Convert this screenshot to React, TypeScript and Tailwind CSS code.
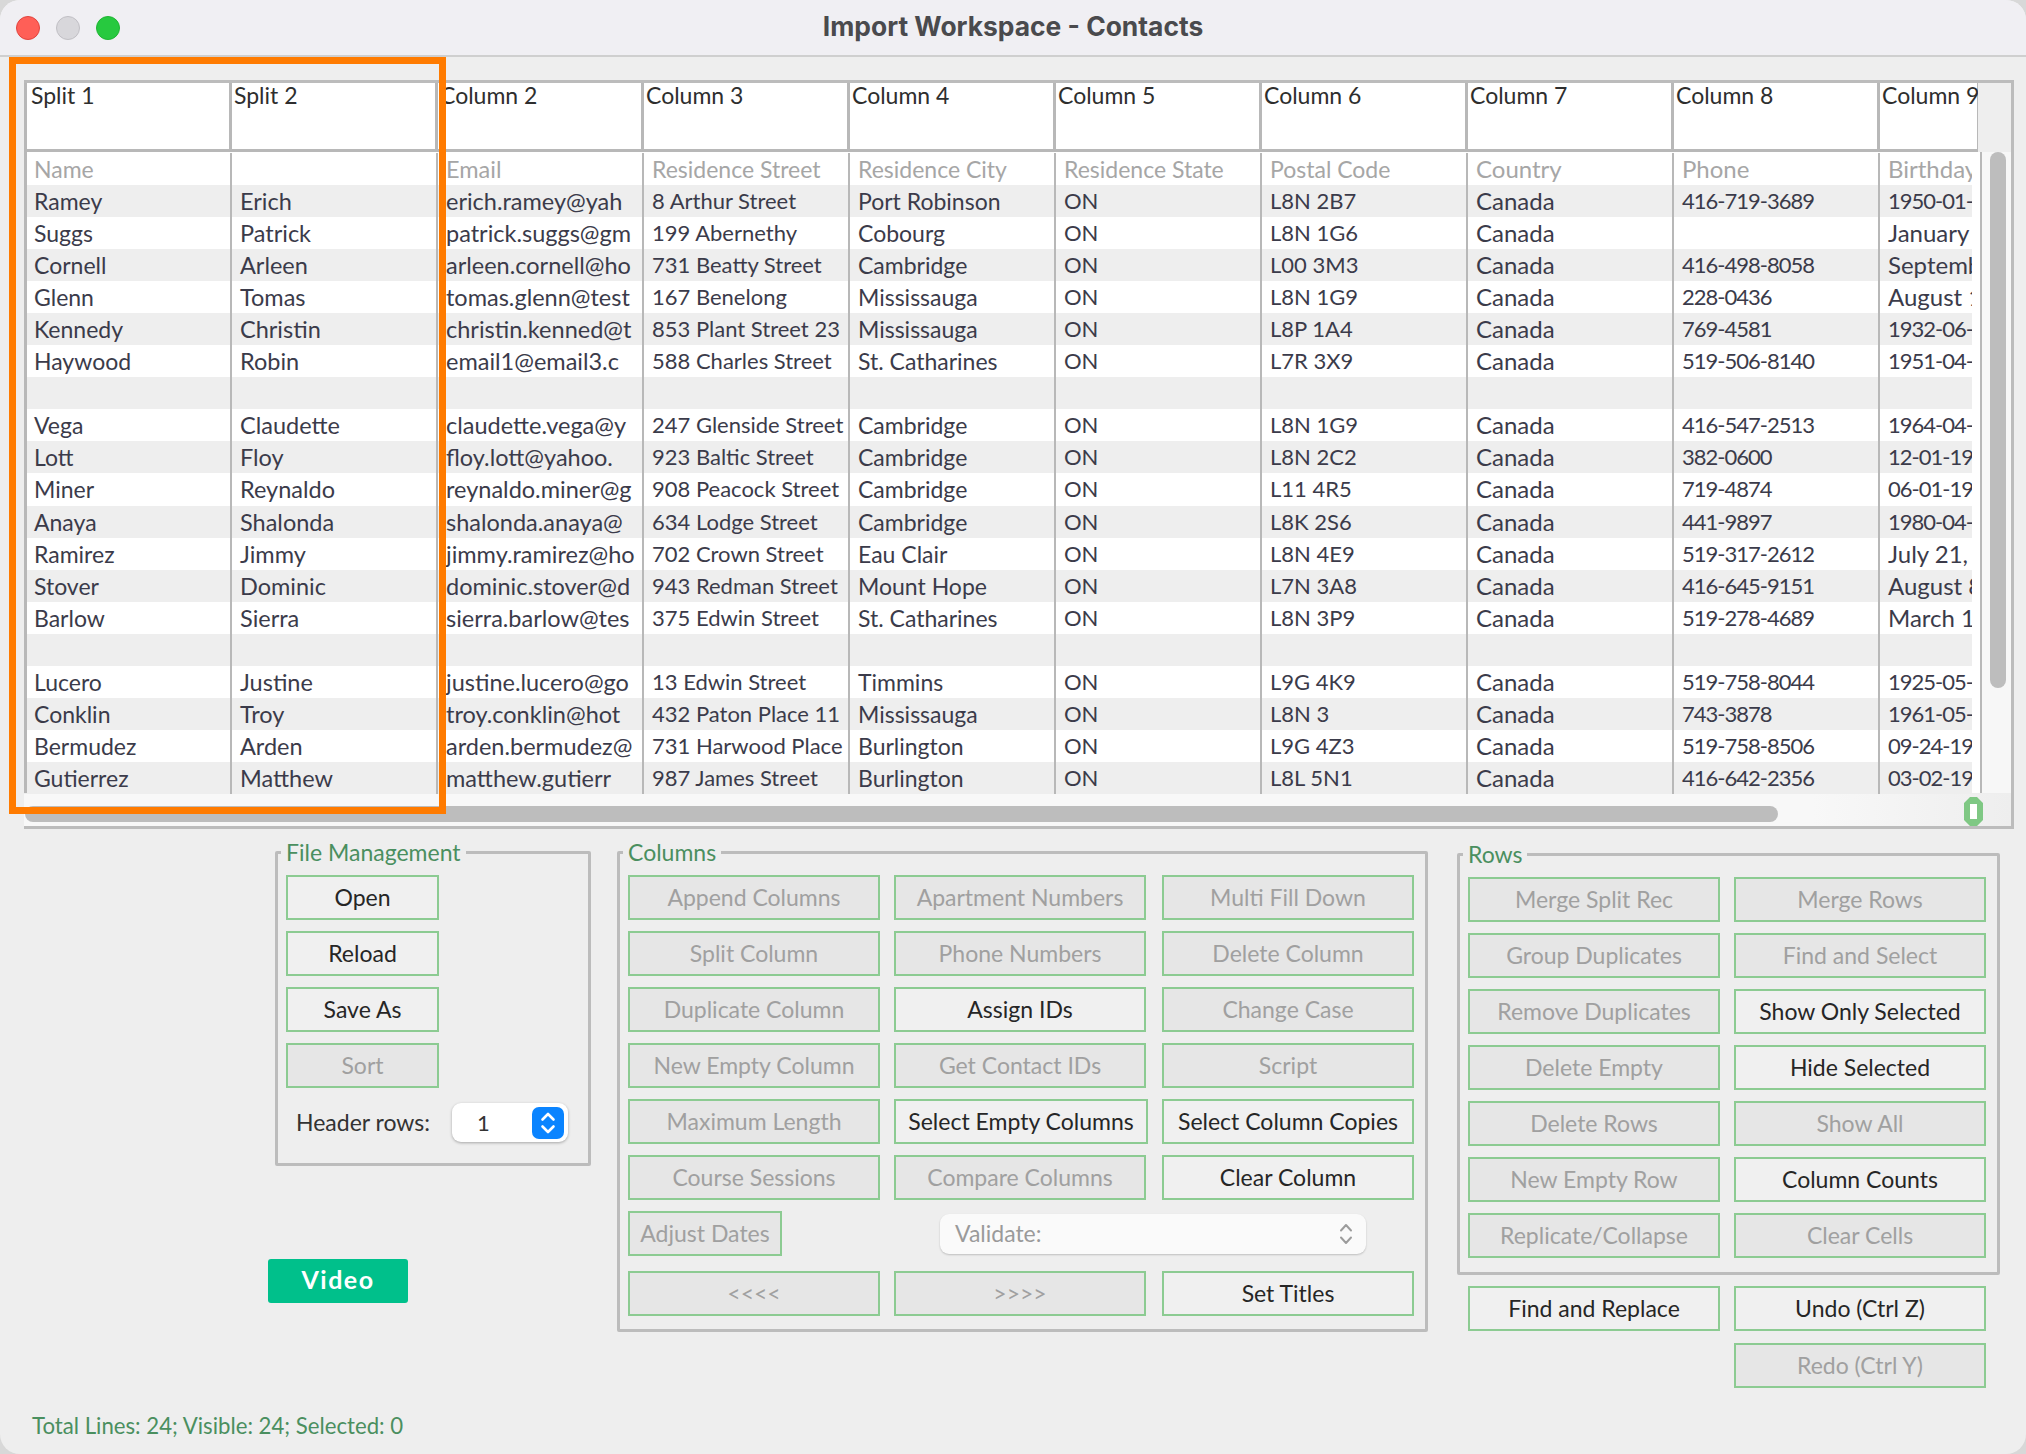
import React from "react";

const heads = ["Split 1", "Split 2", "Column 2", "Column 3", "Column 4", "Column 5", "Column 6", "Column 7", "Column 8", "Column 9"];

const colStyle = [
  "text-[23px]",
  "text-[23.5px]",
  "text-[23.5px]",
  "text-[22px]",
  "text-[23px]",
  "text-[22px]",
  "text-[22px]",
  "text-[24px]",
  "text-[22px] tracking-[-1px]",
  "text-[22px] tracking-[-1px]",
];

const firstRowStyle = [
  "text-[23px]",
  "text-[23.5px]",
  "text-[23.5px]",
  "text-[23px]",
  "text-[23px]",
  "text-[23px]",
  "text-[23px]",
  "text-[24px]",
  "text-[24px]",
  "text-[24px]",
];

const rows: string[][] = [
  ["Name", "", "Email", "Residence Street", "Residence City", "Residence State", "Postal Code", "Country", "Phone", "Birthday"],
  ["Ramey", "Erich", "erich.ramey@yah", "8 Arthur Street", "Port Robinson", "ON", "L8N 2B7", "Canada", "416-719-3689", "1950-01-"],
  ["Suggs", "Patrick", "patrick.suggs@gm", "199 Abernethy", "Cobourg", "ON", "L8N 1G6", "Canada", "", "January"],
  ["Cornell", "Arleen", "arleen.cornell@ho", "731 Beatty Street", "Cambridge", "ON", "L00 3M3", "Canada", "416-498-8058", "Septemb"],
  ["Glenn", "Tomas", "tomas.glenn@test", "167 Benelong", "Mississauga", "ON", "L8N 1G9", "Canada", "228-0436", "August 1"],
  ["Kennedy", "Christin", "christin.kenned@t", "853 Plant Street 23", "Mississauga", "ON", "L8P 1A4", "Canada", "769-4581", "1932-06-"],
  ["Haywood", "Robin", "email1@email3.c", "588 Charles Street", "St. Catharines", "ON", "L7R 3X9", "Canada", "519-506-8140", "1951-04-"],
  ["", "", "", "", "", "", "", "", "", ""],
  ["Vega", "Claudette", "claudette.vega@y", "247 Glenside Street", "Cambridge", "ON", "L8N 1G9", "Canada", "416-547-2513", "1964-04-"],
  ["Lott", "Floy", "floy.lott@yahoo.", "923 Baltic Street", "Cambridge", "ON", "L8N 2C2", "Canada", "382-0600", "12-01-19"],
  ["Miner", "Reynaldo", "reynaldo.miner@g", "908 Peacock Street", "Cambridge", "ON", "L11 4R5", "Canada", "719-4874", "06-01-19"],
  ["Anaya", "Shalonda", "shalonda.anaya@", "634 Lodge Street", "Cambridge", "ON", "L8K 2S6", "Canada", "441-9897", "1980-04-"],
  ["Ramirez", "Jimmy", "jimmy.ramirez@ho", "702 Crown Street", "Eau Clair", "ON", "L8N 4E9", "Canada", "519-317-2612", "July 21,"],
  ["Stover", "Dominic", "dominic.stover@d", "943 Redman Street", "Mount Hope", "ON", "L7N 3A8", "Canada", "416-645-9151", "August 8"],
  ["Barlow", "Sierra", "sierra.barlow@tes", "375 Edwin Street", "St. Catharines", "ON", "L8N 3P9", "Canada", "519-278-4689", "March 15"],
  ["", "", "", "", "", "", "", "", "", ""],
  ["Lucero", "Justine", "justine.lucero@go", "13 Edwin Street", "Timmins", "ON", "L9G 4K9", "Canada", "519-758-8044", "1925-05-"],
  ["Conklin", "Troy", "troy.conklin@hot", "432 Paton Place 11", "Mississauga", "ON", "L8N 3", "Canada", "743-3878", "1961-05-"],
  ["Bermudez", "Arden", "arden.bermudez@", "731 Harwood Place", "Burlington", "ON", "L9G 4Z3", "Canada", "519-758-8506", "09-24-19"],
  ["Gutierrez", "Matthew", "matthew.gutierr", "987 James Street", "Burlington", "ON", "L8L 5N1", "Canada", "416-642-2356", "03-02-19"],
];

function cellStyle(ri: number, ci: number, value: string) {
  if (ri === 0) return firstRowStyle[ci];
  if (ci === 9 && /^[A-Z]/.test(value)) return "text-[24px]";
  return colStyle[ci];
}

function Btn({ label, on, w = "w-full" }: { label: string; on?: boolean; w?: string }) {
  return (
    <div
      className={`${w} h-[45px] shrink-0 border-2 border-[#8ccb92] flex items-center justify-center whitespace-nowrap text-[23px] ${
        on ? "text-[#262626] bg-[#f0f0f0]" : "text-[#a0a0a0] bg-[#e6e6e6]"
      }`}
    >
      {label}
    </div>
  );
}

function Legend({ children }: { children: React.ReactNode }) {
  return <legend className="-ml-[5px] px-[5px] h-[26px] leading-[26px] text-[23px] text-[#4a8f5f]">{children}</legend>;
}

const colBtns: [string, boolean][] = [
  ["Append Columns", false], ["Apartment Numbers", false], ["Multi Fill Down", false],
  ["Split Column", false], ["Phone Numbers", false], ["Delete Column", false],
  ["Duplicate Column", false], ["Assign IDs", true], ["Change Case", false],
  ["New Empty Column", false], ["Get Contact IDs", false], ["Script", false],
  ["Maximum Length", false], ["Select Empty Columns", true], ["Select Column Copies", true],
  ["Course Sessions", false], ["Compare Columns", false], ["Clear Column", true],
];

const rowBtns: [string, boolean][] = [
  ["Merge Split Rec", false], ["Merge Rows", false],
  ["Group Duplicates", false], ["Find and Select", false],
  ["Remove Duplicates", false], ["Show Only Selected", true],
  ["Delete Empty", false], ["Hide Selected", true],
  ["Delete Rows", false], ["Show All", false],
  ["New Empty Row", false], ["Column Counts", true],
  ["Replicate/Collapse", false], ["Clear Cells", false],
];

export default function App() {
  return (
    <div className="relative w-[2026px] h-[1454px] bg-[#d8d8d8] overflow-hidden font-['Lato',sans-serif]">
      <div className="w-full h-full rounded-[20px] bg-[#eeeeee] overflow-hidden flex flex-col">
        {/* Title bar */}
        <div className="relative h-[57px] shrink-0 bg-[#f0eff3] border-b-2 border-[#cfcfcf] flex items-center justify-center pb-[1px]">
          <span className="text-[26.400px] font-bold text-[#4a4a4d] font-['Inter',sans-serif]">Import Workspace - Contacts</span>
          <div className="absolute left-[16px] top-[16px] flex gap-[16px]">
            <span className="w-[24px] h-[24px] rounded-full bg-[#ff5f57] border border-[#e0443e]" />
            <span className="w-[24px] h-[24px] rounded-full bg-[#d8d7db] border border-[#c0bfc4]" />
            <span className="w-[24px] h-[24px] rounded-full bg-[#27c93f] border border-[#1fb533]" />
          </div>
        </div>

        {/* Table */}
        <div className="relative ml-[24px] mt-[23px] w-[1990px] h-[749px] shrink-0 border-t-[3px] border-r-[3px] border-b-[3px] border-[#bcbcbc] flex flex-col">
          <div className="flex h-[69px] shrink-0 w-[1954px] overflow-hidden border-b-[3px] border-[#b8b8b8] border-l-[3px]">
            {heads.map((h, i) => (
              <div
                key={h}
                className={`${i === 9 ? "w-[100px]" : i === 0 ? "w-[205px]" : "w-[206px]"} shrink-0 h-full bg-white border-r-[3px] border-[#b8b8b8] ${i === 0 ? "pl-[4px]" : "pl-[2px]"} text-[23px] leading-[24px] text-[#2e2e2e] whitespace-nowrap`}
              >
                {h}
              </div>
            ))}
          </div>
          <div className="flex flex-1 min-h-0">
            <div className="w-[1958px] shrink-0 bg-white border-r-[2px] border-[#b8b8b8] pt-[1px] border-l-[3px] border-l-[#b8b8b8]">
              {rows.map((r, ri) => (
                <div key={ri} className={`flex w-[1945px] h-[32.05px] overflow-hidden ${ri % 2 === 1 ? "bg-[#eeeeee]" : "bg-white"}`}>
                  {r.map((c, ci) => (
                    <div
                      key={ci}
                      className={`${ci === 9 ? "w-[94px]" : ci === 0 ? "w-[205px]" : "w-[206px]"} shrink-0 h-full ${ci < 9 ? "border-r-[2px] border-[#b8b8b8]" : ""} ${ci === 0 ? "pl-[7px]" : "pl-[8px]"} ${cellStyle(ri, ci, c)} leading-[32px] whitespace-nowrap overflow-hidden ${ri === 0 ? "text-[#a6a6a6]" : "text-[#3b3b4a]"}`}
                    >
                      {c}
                    </div>
                  ))}
                </div>
              ))}
            </div>
            <div className="flex-1 bg-[#f7f7f7] pl-[8px]">
              <div className="w-[16px] h-[536px] rounded-full bg-[#bdbdbd]" />
            </div>
          </div>
          {/* horizontal scroll */}
          <div className="relative h-[32px] shrink-0 bg-[linear-gradient(90deg,#f8f8f8_90%,#eeeeee_100%)] flex items-center pl-[1px] pt-[8px] mt-[1px]">
            <div className="w-[1753px] h-[16px] rounded-full bg-[#bdbdbd]" />
            <svg className="absolute left-[1940px] top-[3px]" width="19" height="29" viewBox="0 0 19 29">
              <path fillRule="evenodd" fill="#7fc884" d="M6 0h7l6 6v17l-6 6H6l-6-6V6zM6 7v15h7V7z" />
              <rect x="6" y="7" width="7" height="15" fill="#ffffff" />
            </svg>
          </div>
        </div>

        {/* Bottom */}
        <div className="flex flex-1 min-h-0 pt-[10px]">
          <div className="w-[617px] shrink-0 pl-[275px] flex flex-col">
            <fieldset className="w-[316px] h-[327px] border-[3px] border-[#bcbcbc] rounded-[2px] pl-[8px] pt-[10px]">
              <Legend>File Management</Legend>
              <div className="flex flex-col gap-[11px] w-[153px]">
                <Btn label="Open" on />
                <Btn label="Reload" on />
                <Btn label="Save As" on />
                <Btn label="Sort" />
              </div>
              <div className="flex items-center mt-[15px] ml-[10px]">
                <span className="text-[23px] text-[#333] w-[156px]">Header rows:</span>
                <div className="w-[116px] h-[39px] rounded-[9px] bg-white shadow-[0_1px_3px_rgba(0,0,0,0.3)] flex items-center justify-between pl-[25px] pr-[4px] text-[22px] text-[#333]">
                  <span>1</span>
                  <span className="w-[32px] h-[32px] rounded-[7px] bg-[#0a84ff] flex items-center justify-center">
                    <svg width="18" height="26" viewBox="0 0 18 26" fill="none" stroke="white" strokeWidth="2.6" strokeLinecap="round" strokeLinejoin="round">
                      <path d="M3.5 9.5 9 4l5.500 5.500" />
                      <path d="M3.500 16.500 9 22l5.500-5.500" />
                    </svg>
                  </span>
                </div>
              </div>
            </fieldset>
            <div className="mt-[93px] -ml-[7px] w-[140px] h-[44px] rounded-[3px] bg-[#00c08b] flex items-center justify-center text-white text-[25px] font-bold tracking-[1.5px] pb-[2px]">
              Video
            </div>
            <div className="mt-auto mb-[12px] -ml-[243px] whitespace-nowrap text-[22.200px] text-[#4a8f5f]">
              Total Lines: 24; Visible: 24; Selected: 0
            </div>
          </div>

          <div className="w-[811px] shrink-0">
            <fieldset className="w-[811px] h-[493px] border-[3px] border-[#bcbcbc] rounded-[2px] pl-[8px] pt-[10px]">
              <Legend>Columns</Legend>
              <div className="grid grid-cols-[252px_254px_252px] gap-x-[14px] gap-y-[11px]">
                {colBtns.map(([l, on], i) => (
                  <Btn key={l} label={l} on={on} w={i % 3 === 1 && l !== "Select Empty Columns" ? "w-[252px]" : "w-full"} />
                ))}
                <div className="col-span-3 flex items-center">
                  <Btn label="Adjust Dates" w="w-[154px]" />
                  <div className="ml-[158px] w-[426px] h-[40px] rounded-[9px] bg-[#fafafa] shadow-[0_1px_2px_rgba(0,0,0,0.2)] flex items-center justify-between pl-[15px] pr-[12px] text-[23px] text-[#9a9a9a]">
                    <span>Validate:</span>
                    <svg width="16" height="26" viewBox="0 0 16 26" fill="none" stroke="#9c9c9c" strokeWidth="2" strokeLinecap="round" strokeLinejoin="round">
                      <path d="M3 9.500 8 4l5 5.500" />
                      <path d="M3 16.500 8 22l5-5.500" />
                    </svg>
                  </div>
                </div>
              </div>
              <div className="grid grid-cols-[252px_254px_252px] gap-x-[14px] mt-[15px]">
                <Btn label="<<<<" />
                <Btn label=">>>>" w="w-[252px]" />
                <Btn label="Set Titles" on />
              </div>
            </fieldset>
          </div>

          <div className="ml-[29px] w-[543px] shrink-0 pt-[2px]">
            <fieldset className="w-[543px] h-[434px] border-[3px] border-[#bcbcbc] rounded-[2px] pl-[8px] pt-[10px]">
              <Legend>Rows</Legend>
              <div className="grid grid-cols-[252px_252px] gap-x-[14px] gap-y-[11px]">
                {rowBtns.map(([l, on]) => (
                  <Btn key={l} label={l} on={on} />
                ))}
              </div>
            </fieldset>
            <div className="grid grid-cols-[252px_252px] gap-x-[14px] gap-y-[12px] ml-[11px] mt-[11px]">
              <Btn label="Find and Replace" on />
              <Btn label="Undo (Ctrl Z)" on />
              <div />
              <Btn label="Redo (Ctrl Y)" />
            </div>
          </div>
        </div>
      </div>
      {/* Orange highlight */}
      <div className="absolute left-[9px] top-[57px] w-[437px] h-[757px] border-[7px] border-[#ff7b00] pointer-events-none" />
    </div>
  );
}
